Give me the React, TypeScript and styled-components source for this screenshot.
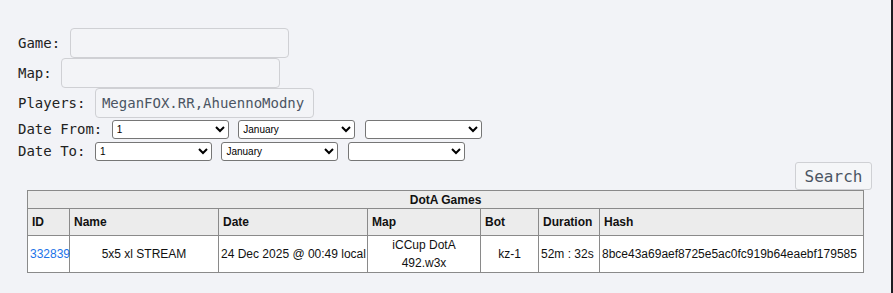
import styled, { createGlobalStyle } from 'styled-components';

const GlobalStyle = createGlobalStyle`
  html, body {
    margin: 0;
    padding: 0;
    background: #f2f3f7;
  }
  body {
    font-family: "DejaVu Sans Mono", monospace;
  }
`;

const Page = styled.div`
  width: 891px;
  min-height: 293px;
  border-right: 2px solid #1c1c22;
  background: #f2f3f7;
`;

const SearchForm = styled.form`
  display: flex;
  flex-direction: column;
  padding: 27px 19px 0 18px;
`;

const FieldRow = styled.label<{ $height?: number }>`
  display: flex;
  align-items: center;
  gap: 9.5px;
  height: ${(p) => p.$height ?? 30}px;
  font-family: "DejaVu Sans Mono", monospace;
  font-size: 14px;
  color: #222;
`;

const TextInput = styled.input`
  box-sizing: border-box;
  width: 219px;
  height: 30px;
  padding: 0 6px;
  border: 1px solid #cfd0d4;
  border-radius: 4px;
  background: #f3f4f7;
  font-family: "DejaVu Sans Mono", monospace;
  font-size: 14px;
  color: #4b5563;
  outline: none;
`;

const Selects = styled.div`
  display: flex;
  gap: 9.5px;
`;

const DateSelect = styled.select`
  box-sizing: border-box;
  width: 117px;
  height: 19px;
  font-family: "Liberation Sans", Arial, sans-serif;
  font-size: 10px;
  color: #000;
  background: #fff;
  border: 1px solid #767676;
  border-radius: 3px;
`;

const ButtonRow = styled.div`
  display: flex;
  justify-content: flex-end;
`;

const SearchButton = styled.button`
  box-sizing: border-box;
  width: 77px;
  height: 28px;
  padding: 0;
  border: 1px solid #cfd0d4;
  border-radius: 3px;
  background: #f5f6f8;
  font-family: "DejaVu Sans Mono", monospace;
  font-size: 16px;
  color: #4b5563;
`;

const Games = styled.table`
  margin-left: 27px;
  width: 836px;
  table-layout: fixed;
  border-collapse: collapse;
  border: 1px solid #8a8a8a;
  font-family: "Liberation Sans", Arial, sans-serif;
  font-size: 12px;
  color: #111;
`;

const TitleCell = styled.th`
  height: 17px;
  padding: 0;
  background: #ececec;
  border: 1px solid #8a8a8a;
  text-align: center;
  font-weight: bold;
`;

const HeadCell = styled.th`
  height: 26px;
  padding: 0 4px;
  background: #ececec;
  border: 1px solid #8a8a8a;
  text-align: left;
  font-weight: bold;
  white-space: nowrap;
`;

const Cell = styled.td<{ $align?: 'left' | 'center'; $wrap?: boolean }>`
  height: 36px;
  padding: 0 2px;
  background: #fff;
  border: 1px solid #8a8a8a;
  line-height: 18px;
  text-align: ${(p) => p.$align ?? 'left'};
  white-space: ${(p) => (p.$wrap ? 'normal' : 'nowrap')};
`;

const GameLink = styled.a`
  color: #1a73e8;
  text-decoration: none;
`;

const columns = [
  { label: 'ID', width: 42 },
  { label: 'Name', width: 149 },
  { label: 'Date', width: 149 },
  { label: 'Map', width: 113 },
  { label: 'Bot', width: 58 },
  { label: 'Duration', width: 61 },
  { label: 'Hash', width: 264 },
];

const days = Array.from({ length: 31 }, (_, i) => i + 1);
const months = [
  'January', 'February', 'March', 'April', 'May', 'June',
  'July', 'August', 'September', 'October', 'November', 'December',
];

function DateFields() {
  return (
    <Selects>
      <DateSelect defaultValue="1">
        {days.map((d) => (
          <option key={d} value={d}>{d}</option>
        ))}
      </DateSelect>
      <DateSelect defaultValue="January">
        {months.map((m) => (
          <option key={m}>{m}</option>
        ))}
      </DateSelect>
      <DateSelect defaultValue="">
        <option value=""></option>
        <option>2025</option>
        <option>2024</option>
      </DateSelect>
    </Selects>
  );
}

export default function App() {
  return (
    <Page>
      <GlobalStyle />
      <SearchForm onSubmit={(e) => e.preventDefault()}>
        <FieldRow $height={31}>
          Game:
          <TextInput type="text" />
        </FieldRow>
        <FieldRow>
          Map:
          <TextInput type="text" />
        </FieldRow>
        <FieldRow>
          Players:
          <TextInput type="text" defaultValue="MeganFOX.RR,AhuennoModny" />
        </FieldRow>
        <FieldRow $height={22}>
          Date From:
          <DateFields />
        </FieldRow>
        <FieldRow $height={22}>
          Date To:
          <DateFields />
        </FieldRow>
        <ButtonRow>
          <SearchButton type="submit">Search</SearchButton>
        </ButtonRow>
      </SearchForm>

      <Games>
        <colgroup>
          {columns.map((c) => (
            <col key={c.label} style={{ width: c.width }} />
          ))}
        </colgroup>
        <thead>
          <tr>
            <TitleCell colSpan={7}>DotA Games</TitleCell>
          </tr>
          <tr>
            {columns.map((c) => (
              <HeadCell key={c.label}>{c.label}</HeadCell>
            ))}
          </tr>
        </thead>
        <tbody>
          <tr>
            <Cell>
              <GameLink href="#">332839</GameLink>
            </Cell>
            <Cell $align="center">5x5 xl STREAM</Cell>
            <Cell>24 Dec 2025 @ 00:49 local</Cell>
            <Cell $align="center" $wrap>iCCup DotA 492.w3x</Cell>
            <Cell $align="center">kz-1</Cell>
            <Cell>52m : 32s</Cell>
            <Cell>8bce43a69aef8725e5ac0fc919b64eaebf179585</Cell>
          </tr>
        </tbody>
      </Games>
    </Page>
  );
}
